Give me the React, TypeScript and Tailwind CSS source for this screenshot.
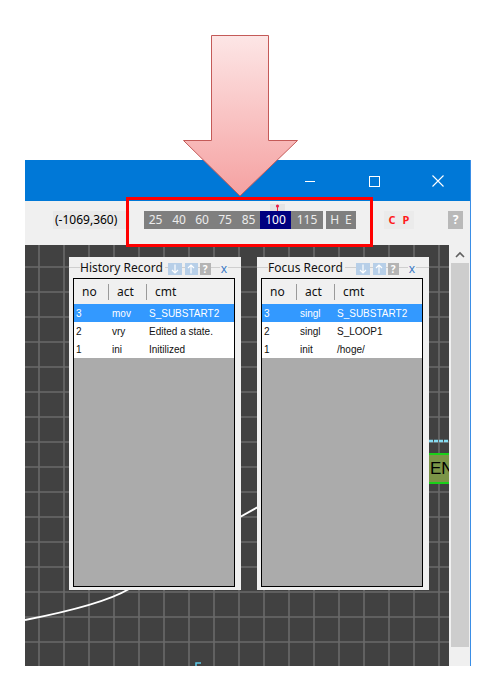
import React from 'react';

type Row = { no: string; act: string; cmt: string; selected?: boolean };

const historyRows: Row[] = [
  { no: '3', act: 'mov', cmt: 'S_SUBSTART2', selected: true },
  { no: '2', act: 'vry', cmt: 'Edited a state.' },
  { no: '1', act: 'ini', cmt: 'Initilized' },
];

const focusRows: Row[] = [
  { no: '3', act: 'singl', cmt: 'S_SUBSTART2', selected: true },
  { no: '2', act: 'singl', cmt: 'S_LOOP1' },
  { no: '1', act: 'init', cmt: '/hoge/' },
];

const zoomSteps = [
  { label: '25', w: 'w-[23px]' },
  { label: '40', w: 'w-[24px]' },
  { label: '60', w: 'w-[22px]' },
  { label: '75', w: 'w-[24px]' },
  { label: '85', w: 'w-[23px]' },
  { label: '100', w: 'w-[31px]', active: true },
  { label: '115', w: 'w-[32px]' },
];

const App = () => {
  return (
    <div className="relative w-[491px] h-[696px] bg-white overflow-hidden font-['Noto_Sans','Liberation_Sans',sans-serif]">
      <div className="ml-[25px] mt-[160px] w-[446px] h-[506px] flex flex-col border-r border-[#3a8ee6]">
        <TitleBar />
        <ToolBar />
        <div className="flex flex-1 min-h-0">
          <Canvas />
          <ScrollBar />
        </div>
      </div>

      {/* callout arrow */}
      <div className="absolute left-[182px] top-[34px] w-[117px] h-[164px]">
        <svg width="117" height="164" viewBox="0 0 117 164">
          <defs>
            <linearGradient id="arrowFill" x1="0" y1="0" x2="0" y2="1">
              <stop offset="0" stopColor="#fde6e6" />
              <stop offset="1" stopColor="#f5a1a1" />
            </linearGradient>
          </defs>
          <polygon
            points="29.5,1.5 86.5,1.5 86.5,106.5 115.5,106.5 58,162 1.5,106.5 29.5,106.5"
            fill="url(#arrowFill)"
            stroke="#c45a58"
            strokeWidth="1"
          />
        </svg>
      </div>

      {/* highlight frame */}
      <div className="absolute left-[126px] top-[197px] w-[247px] h-[50px] border-[3px] border-[#ff0000]"></div>
    </div>
  );
};

export default App;

const TitleBar = () => {
  return (
    <div className="h-[41px] bg-[#0078d7] flex justify-end">
      <div className="w-[64px] flex items-center justify-center">
        <svg width="12" height="12" viewBox="0 0 12 12">
          <line x1="1" y1="6.5" x2="11" y2="6.5" stroke="white" strokeWidth="1" />
        </svg>
      </div>
      <div className="w-[64px] flex items-center justify-center">
        <svg width="12" height="12" viewBox="0 0 12 12">
          <rect x="1.5" y="1.5" width="10" height="10" fill="none" stroke="white" strokeWidth="1" />
        </svg>
      </div>
      <div className="w-[64px] flex items-center justify-center">
        <svg width="14" height="14" viewBox="0 0 14 14">
          <path d="M1.5 1.5 L12.5 12.5 M12.5 1.5 L1.5 12.5" stroke="white" strokeWidth="1.1" />
        </svg>
      </div>
    </div>
  );
};

const ToolBar = () => {
  return (
    <div className="h-[44px] bg-[#f0f0f0] flex items-start pt-[10px] text-[12px] leading-[18px]">
      <div className="ml-[28px] w-[77px] h-[18px] bg-[#e9e9e9] pl-[2px] text-black whitespace-nowrap">(-1069,360)</div>
      <div className="relative ml-[14px] flex h-[18px] bg-[#7f7f7f]">
        {zoomSteps.map((s, i) => (
          <div
            key={i}
            className={`${s.w} h-[18px] text-center ${s.active ? 'bg-[#000080] text-white' : 'text-[#ececec]'}`}
          >
            {s.label}
          </div>
        ))}
        <div className="absolute left-[126px] top-[-7px] w-[15px] h-[7px] bg-[#e4e4e4] flex justify-center">
          <svg width="5" height="7" viewBox="0 0 5 7">
            <circle cx="2.5" cy="2" r="1.6" fill="#e8204a" />
            <line x1="2.5" y1="2" x2="2.5" y2="7" stroke="#e8204a" strokeWidth="1" />
          </svg>
        </div>
      </div>
      <div className="ml-[3px] w-[30px] h-[18px] bg-[#7f7f7f] text-[#ececec] flex justify-center gap-[6px]">
        <span>H</span>
        <span>E</span>
      </div>
      <div className="ml-[28px] w-[30px] h-[18px] bg-[#ebebeb] text-[#ff1a1a] font-bold flex justify-center gap-[7px] text-[11px]">
        <span>C</span>
        <span>P</span>
      </div>
      <div className="ml-[34px] w-[15px] h-[18px] bg-[#b9b9b9] text-white font-bold text-center text-[12px]">?</div>
    </div>
  );
};

const Canvas = () => {
  const vLines = Array.from({ length: 17 }, (_, i) => 14 + i * 25);
  const hLines = Array.from({ length: 17 }, (_, i) => 22 + i * 25);
  return (
    <div className="relative flex-1 bg-[#414141] overflow-hidden">
      <svg className="absolute inset-0" width="424" height="421" viewBox="0 0 424 421">
        {vLines.map((x) => (
          <line key={'v' + x} x1={x} y1="0" x2={x} y2="421" stroke="#6a6a6a" strokeWidth="1.6" />
        ))}
        {hLines.map((y) => (
          <line key={'h' + y} x1="0" y1={y} x2="424" y2={y} stroke="#6a6a6a" strokeWidth="1.6" />
        ))}
        <path d="M0 375 Q77 360 104 344" fill="none" stroke="white" strokeWidth="2" />
        <path d="M215 272 L233 262" fill="none" stroke="white" strokeWidth="2" />
        <line x1="404" y1="196" x2="424" y2="196" stroke="#86dcf2" strokeWidth="2.5" strokeDasharray="4 1" />
        <path d="M171 421 L171 418 L176 418" fill="none" stroke="#5cc8e8" strokeWidth="1.5" />
      </svg>

      <div className="absolute left-[404px] top-[208px] w-[40px] h-[31px] bg-[#7b9447] border-y-2 border-[#19d019] text-[17px] leading-[27px] pl-[1px] text-black font-['Liberation_Sans',sans-serif]">
        END
      </div>

      <RecordPanel title="History Record" pos="left-[44px]" rows={historyRows} />
      <RecordPanel title="Focus Record" pos="left-[232px]" rows={focusRows} />
    </div>
  );
};

const RecordPanel = ({ title, pos, rows }: { title: string; pos: string; rows: Row[] }) => {
  return (
    <div className={`absolute top-[12px] ${pos} w-[172px] h-[333px] bg-[#f0f0f0] flex flex-col pl-[4px] pr-[6px] pb-[3px]`}>
      <div className="relative h-[21px] flex items-center">
        <div className="absolute left-[-4px] right-[-6px] top-[10px] h-px bg-[#cfcfcf]"></div>
        <span className="relative ml-[7px] px-[0px] bg-[#f0f0f0] text-[12px] text-[#111] leading-[14px] pr-[2px]">{title}</span>
        <div className="relative ml-auto flex items-center h-[12px] mt-[3px]">
          <div className="w-[14px] h-[12px] bg-[#b7cfe8] flex items-center justify-center">
            <svg width="8" height="10" viewBox="0 0 8 10">
              <path d="M4 0.5 V9 M1 6 L4 9 L7 6" fill="none" stroke="white" strokeWidth="1.2" />
            </svg>
          </div>
          <div className="ml-[3px] w-[13px] h-[12px] bg-[#b7cfe8] flex items-center justify-center">
            <svg width="8" height="10" viewBox="0 0 8 10">
              <path d="M4 9.5 V1 M1 4 L4 1 L7 4" fill="none" stroke="white" strokeWidth="1.2" />
            </svg>
          </div>
          <div className="ml-[2px] w-[11px] h-[12px] bg-[#b4b4b4] text-white text-[10px] font-bold leading-[12px] text-center">?</div>
          <div className="ml-[9px] mr-[7px] text-[#3b78c4] text-[12px] leading-[12px] bg-[#f0f0f0] px-[1px]">x</div>
        </div>
      </div>
      <div className="flex-1 border border-black bg-[#ababab] flex flex-col font-['Liberation_Sans',sans-serif]">
        <div className="h-[25px] bg-[#f0f0f0] flex items-center text-[12px] text-[#111] font-['Noto_Sans',sans-serif]">
          <div className="w-[34px] pl-[8px]">no</div>
          <div className="w-px h-[16px] bg-[#9a9a9a]"></div>
          <div className="w-[37px] pl-[8px]">act</div>
          <div className="w-px h-[16px] bg-[#9a9a9a]"></div>
          <div className="flex-1 pl-[8px]">cmt</div>
        </div>
        {rows.map((r, i) => (
          <div
            key={i}
            className={`h-[18px] flex items-center text-[10px] ${r.selected ? 'bg-[#3399ff] text-white' : 'bg-white text-[#111]'}`}
          >
            <div className="w-[35px] pl-[2px]">{r.no}</div>
            <div className="w-[38px] pl-[3px]">{r.act}</div>
            <div className="flex-1 pl-[2px] whitespace-nowrap overflow-hidden">{r.cmt}</div>
          </div>
        ))}
      </div>
    </div>
  );
};

const ScrollBar = () => {
  return (
    <div className="w-[21px] bg-[#f0f0f0] flex flex-col">
      <div className="h-[18px] flex items-center justify-center">
        <svg width="10" height="7" viewBox="0 0 10 7">
          <path d="M1 6 L5 2 L9 6" fill="none" stroke="#606060" strokeWidth="1.6" />
        </svg>
      </div>
      <div className="flex-1 ml-[2px] mr-[1px] bg-[#cdcdcd]"></div>
      <div className="h-[19px]"></div>
    </div>
  );
};
